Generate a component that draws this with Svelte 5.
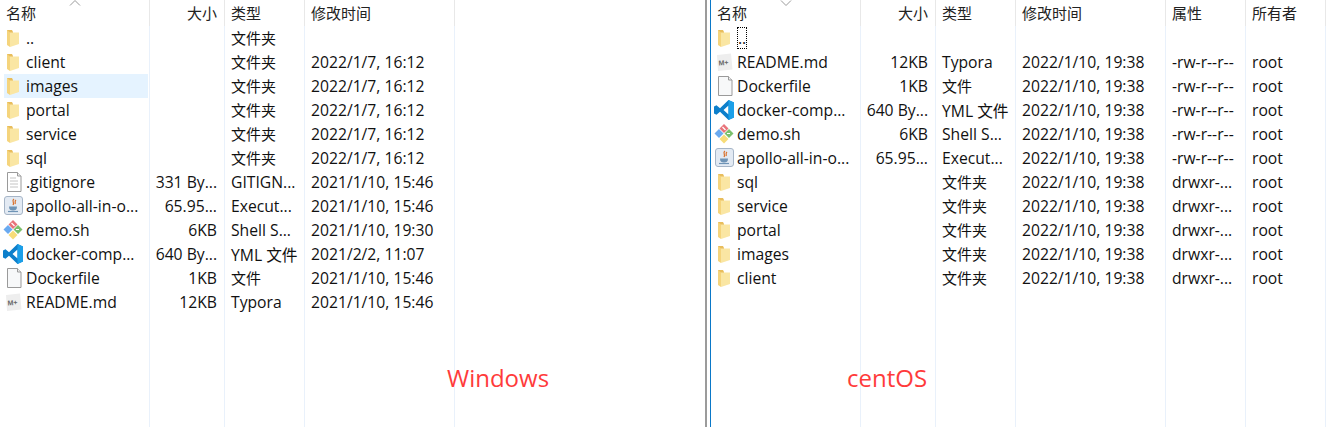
<script>
	const folder = (name, time) => ({ icon: 'folder', name, size: '', type: '文件夹', time })

	const windowsFiles = [
		folder('..', ''),
		folder('client', '2022/1/7, 16:12'),
		{ ...folder('images', '2022/1/7, 16:12'), selected: true },
		folder('portal', '2022/1/7, 16:12'),
		folder('service', '2022/1/7, 16:12'),
		folder('sql', '2022/1/7, 16:12'),
		{ icon: 'text', name: '.gitignore', size: '331 By...', type: 'GITIGN...', time: '2021/1/10, 15:46' },
		{ icon: 'java', name: 'apollo-all-in-o...', size: '65.95...', type: 'Execut...', time: '2021/1/10, 15:46' },
		{ icon: 'shell', name: 'demo.sh', size: '6KB', type: 'Shell S...', time: '2021/1/10, 19:30' },
		{ icon: 'vscode', name: 'docker-comp...', size: '640 By...', type: 'YML 文件', time: '2021/2/2, 11:07' },
		{ icon: 'page', name: 'Dockerfile', size: '1KB', type: '文件', time: '2021/1/10, 15:46' },
		{ icon: 'md', name: 'README.md', size: '12KB', type: 'Typora', time: '2021/1/10, 15:46' }
	]

	const stamp = '2022/1/10, 19:38'
	const rw = '-rw-r--r--'
	const dir = 'drwxr-...'

	const centosFiles = [
		{ icon: 'folder', name: '..', size: '', type: '', time: '', attr: '', owner: '', focus: true },
		{ icon: 'md', name: 'README.md', size: '12KB', type: 'Typora', time: stamp, attr: rw, owner: 'root' },
		{ icon: 'page', name: 'Dockerfile', size: '1KB', type: '文件', time: stamp, attr: rw, owner: 'root' },
		{ icon: 'vscode', name: 'docker-comp...', size: '640 By...', type: 'YML 文件', time: stamp, attr: rw, owner: 'root' },
		{ icon: 'shell', name: 'demo.sh', size: '6KB', type: 'Shell S...', time: stamp, attr: rw, owner: 'root' },
		{ icon: 'java', name: 'apollo-all-in-o...', size: '65.95...', type: 'Execut...', time: stamp, attr: rw, owner: 'root' },
		...['sql', 'service', 'portal', 'images', 'client'].map((name) => ({
			...folder(name, stamp), attr: dir, owner: 'root'
		}))
	]

	const isCjk = (type) => type.startsWith('文')
</script>

{#snippet fileIcon(kind)}
	<svg class="icon" width="20" height="20" viewBox="0 0 20 20">
		{#if kind === 'folder'}
			<path d="M4 2h5l1 2v13l-6 0z" fill="#e8bd5c" />
			<path d="M7 4.500h9V16L7 19z" fill="#fae6a3" />
			<path d="M4 2v15l3 2V4.500z" fill="#f5d47c" />
		{:else if kind === 'text'}
			<path d="M4.500 .5h10l3.500 3.500v15.500H4.500z" fill="#fff" stroke="#9a9a9a" />
			<path d="M14.500 .5v3.500H18" fill="#eee" stroke="#9a9a9a" />
			<path d="M7 6h6M7 9h8M7 12h8M7 15h8" stroke="#c4c4c4" />
		{:else if kind === 'page'}
			<path d="M4.500 .5h10l3.500 3.500v15.500H4.500z" fill="#f7f8f9" stroke="#9a9a9a" />
			<path d="M14.500 .5v3.500H18" fill="#eee" stroke="#9a9a9a" />
		{:else if kind === 'java'}
			<rect x="1.500" y=".5" width="18" height="18" rx="2.500" fill="#e3eaf3" stroke="#a6b5c7" />
			<path d="M11 3c-3 2 1 3-1 6M13 4c-2 1.500 0 2.500-1 4" fill="none" stroke="#d9702a" stroke-width="1.200" />
			<path d="M6 10.500h8c0 3-1.500 4-4 4s-4-1-4-4z" fill="#6f94b6" />
			<path d="M5 15.500h10" stroke="#6f94b6" stroke-width="1.200" />
		{:else if kind === 'shell'}
			<path d="M10 0l4.500 4.500L10 9 5.500 4.500z" fill="#e8747a" />
			<path d="M15 5l4.500 4.500L15 14l-4.500-4.500z" fill="#7cc06c" />
			<path d="M10 10.500l4.500 4.500L10 19.500 5.500 15z" fill="#f7dc78" />
			<path d="M5 5l4.500 4.500L5 14 .5 9.500z" fill="#6aaaf0" />
			<path d="M8.500 3l3 3M13 9.500h3" stroke="#fff" stroke-width="1.200" />
		{:else if kind === 'vscode'}
			<path d="M14.500 0L20 2.500v15L14.500 20 6 11.800 2.500 14.800 0 13.500V6.500l2.500-1.300L6 8.200zM14.500 5.500L9.500 10l5 4.500z" fill="#0d7fcb" />
			<path d="M14.500 0L20 2.500v15L14.500 20z M14.500 5.500V14.500" fill="#1b9fe8" />
		{:else if kind === 'md'}
			<path d="M3 3l14-1.500 1.500 16L4 19z" fill="#eeeeee" />
			<text x="4.500" y="13" class="md-mark" transform="rotate(-4 10 10)">M+</text>
		{/if}
	</svg>
{/snippet}

<div class="page">
	<section class="pane windows">
		<div class="row head">
			<div class="cell name sorted">名称<svg class="caret" width="12" height="6" viewBox="0 0 12 6"><path d="M1 5.500l5-5 5 5" fill="none" stroke="#999" /></svg></div>
			<div class="cell size">大小</div>
			<div class="cell">类型</div>
			<div class="cell">修改时间</div>
			<div class="end"></div>
		</div>
		{#each windowsFiles as f}
			<div class="row">
				<div class="cell name" class:selected={f.selected}>
					{@render fileIcon(f.icon)}<span>{f.name}</span>
				</div>
				<div class="cell size">{f.size}</div>
				<div class="cell" class:cjk={isCjk(f.type)}>{f.type}</div>
				<div class="cell">{f.time}</div>
				<div class="end"></div>
			</div>
		{/each}
		<div class="row filler">
			<div class="cell name"></div>
			<div class="cell"></div>
			<div class="cell"></div>
			<div class="cell"></div>
			<div class="end"></div>
		</div>
		<div class="label">Windows</div>
	</section>

	<div class="split"></div>

	<section class="pane centos">
		<div class="row head">
			<div class="cell name sorted">名称<svg class="caret" width="12" height="6" viewBox="0 0 12 6"><path d="M1 .5l5 5 5-5" fill="none" stroke="#999" /></svg></div>
			<div class="cell size">大小</div>
			<div class="cell">类型</div>
			<div class="cell">修改时间</div>
			<div class="cell">属性</div>
			<div class="cell">所有者</div>
			<div class="end"></div>
		</div>
		{#each centosFiles as f}
			<div class="row">
				<div class="cell name">
					{@render fileIcon(f.icon)}<span class:focus={f.focus}>{f.name}</span>
				</div>
				<div class="cell size">{f.size}</div>
				<div class="cell" class:cjk={isCjk(f.type)}>{f.type}</div>
				<div class="cell">{f.time}</div>
				<div class="cell">{f.attr}</div>
				<div class="cell">{f.owner}</div>
				<div class="end"></div>
			</div>
		{/each}
		<div class="row filler">
			<div class="cell name"></div>
			<div class="cell"></div>
			<div class="cell"></div>
			<div class="cell"></div>
			<div class="cell"></div>
			<div class="cell"></div>
			<div class="end"></div>
		</div>
		<div class="label">centOS</div>
	</section>
</div>

<style>
	:global(body) {
		background: #fff;
		overflow: hidden;
	}

	.page {
		display: flex;
		height: 427px;
		font-family: "Open Sans", "Noto Sans CJK SC", sans-serif;
		font-size: 15.7px;
		color: #111;
	}

	.pane {
		position: relative;
		display: flex;
		flex-direction: column;
	}

	.windows {
		width: 705px;
	}

	.centos {
		flex: 1;
	}

	.split {
		width: 6px;
		border-left: 2px solid #9b9b9b;
		border-right: 1px solid #0a78c8;
		box-sizing: border-box;
	}

	.row {
		display: grid;
		height: 24px;
		box-sizing: border-box;
	}

	.windows .row {
		grid-template-columns: 150px 75px 80px 150px 1fr;
	}

	.centos .row {
		grid-template-columns: 150px 75px 80px 150px 80px 80px 1fr;
	}

	.row.head {
		height: 26px;
		color: #222;
		font-size: 15px;
	}

	.row.filler {
		flex: 1;
	}

	.cell {
		display: flex;
		align-items: center;
		padding-left: 6px;
		box-sizing: border-box;
		border-right: 1px solid #e9f1fb;
		white-space: nowrap;
		overflow: hidden;
	}

	.cell.cjk {
		font-size: 15px;
		padding-bottom: 2px;
	}

	.head .cell {
		border-right-color: #e8e8e8;
		padding-bottom: 2px;
	}

	.cell.size {
		justify-content: flex-end;
		padding-left: 0;
		padding-right: 7px;
	}

	.row:not(.head) .cell.name {
		padding-left: 3px;
		gap: 3px;
	}

	.cell.name.sorted {
		position: relative;
		overflow: visible;
	}

	.caret {
		position: absolute;
		left: 69px;
		top: 0;
	}

	.cell.selected {
		background: linear-gradient(#e5f3ff, #e5f3ff) 4px 0 / 144px 100% no-repeat;
	}

	.icon {
		flex: none;
	}

	.md-mark {
		font: bold 7px "Liberation Sans", sans-serif;
		fill: #666;
	}

	.focus {
		outline: 1px dotted #000;
		outline-offset: -1px;
		height: 22px;
		display: flex;
		align-items: flex-end;
		padding: 0 1px;
		line-height: 22px;
	}

	.label {
		position: absolute;
		top: 360px;
		color: #ff3b3b;
		font-size: 24px;
		line-height: 36px;
	}

	.windows .label {
		left: 447px;
	}

	.centos .label {
		left: 136px;
	}
</style>
